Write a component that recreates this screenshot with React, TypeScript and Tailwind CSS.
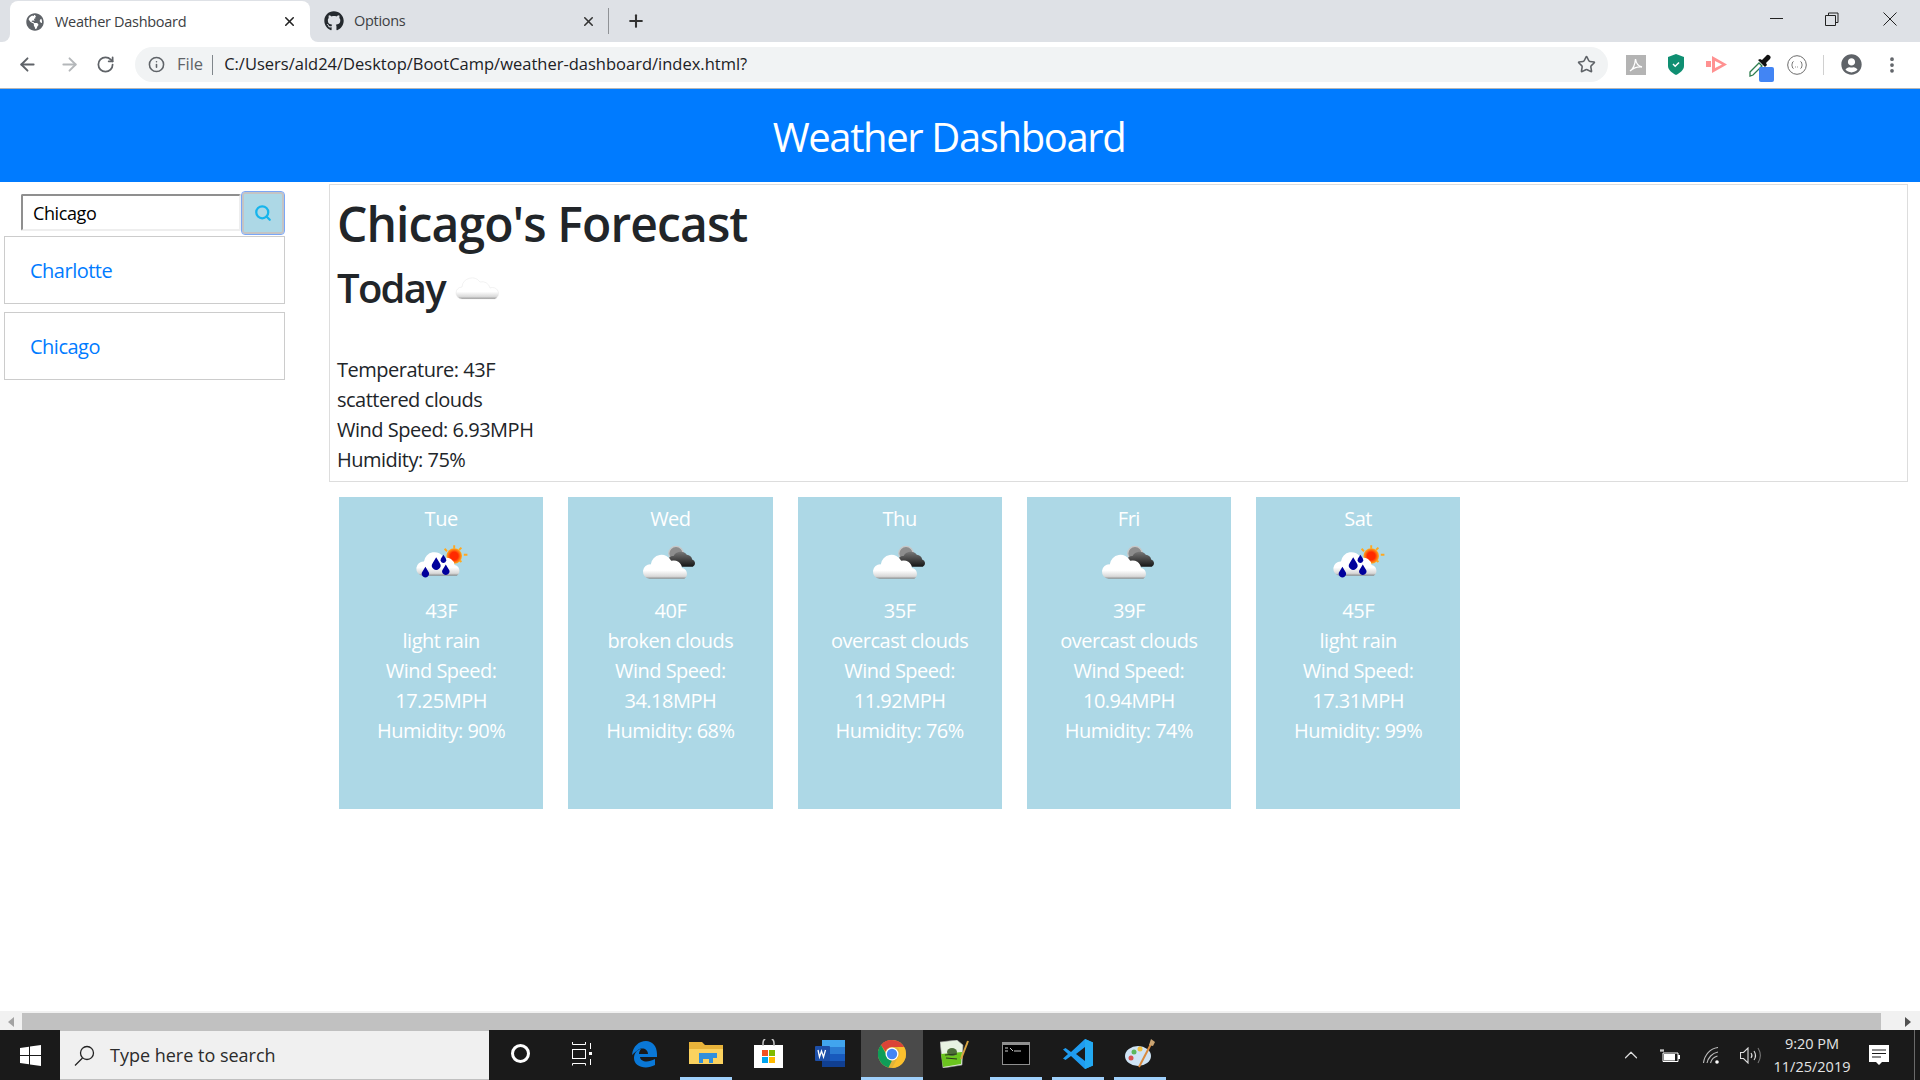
import React from 'react';
import { ArrowLeft, ArrowRight, RotateCw, Info, Star, X, Plus, Search, MoreVertical, ChevronUp } from 'lucide-react';
import { FaGithub, FaGlobeAmericas, FaUserCircle } from 'react-icons/fa';

type IconKind = 'rain' | 'broken' | 'overcast';

interface Day {
  name: string;
  icon: IconKind;
  temp: string;
  desc: string;
  wind: string;
  humidity: string;
}

const days: Day[] = [
  { name: 'Tue', icon: 'rain', temp: '43F', desc: 'light rain', wind: '17.25MPH', humidity: '90%' },
  { name: 'Wed', icon: 'broken', temp: '40F', desc: 'broken clouds', wind: '34.18MPH', humidity: '68%' },
  { name: 'Thu', icon: 'overcast', temp: '35F', desc: 'overcast clouds', wind: '11.92MPH', humidity: '76%' },
  { name: 'Fri', icon: 'overcast', temp: '39F', desc: 'overcast clouds', wind: '10.94MPH', humidity: '74%' },
  { name: 'Sat', icon: 'rain', temp: '45F', desc: 'light rain', wind: '17.31MPH', humidity: '99%' },
];

const cloudPath = 'M8 30a6 6 0 0 1 1-12 9 9 0 0 1 17-3 7 7 0 0 1 9 6 5 5 0 0 1 2 9z';

const WeatherIcon: React.FC<{ kind: IconKind | 'today'; id: string; size: number }> = ({ kind, id, size }) => (
  <svg width={size} height={size} viewBox="0 0 50 50">
    <defs>
      <linearGradient id={`${id}-w`} x1="0" y1="0" x2="0" y2="1">
        <stop offset="0.65" stopColor="#ffffff" />
        <stop offset="0.9" stopColor="#d8d8d8" />
        <stop offset="1" stopColor="#8a8a8a" />
      </linearGradient>
      <linearGradient id={`${id}-d`} x1="0" y1="0" x2="0" y2="1">
        <stop offset="0" stopColor="#777777" />
        <stop offset="1" stopColor="#151515" />
      </linearGradient>
      <radialGradient id={`${id}-s`}>
        <stop offset="0.5" stopColor="#ff2a00" />
        <stop offset="1" stopColor="#ffb020" />
      </radialGradient>
    </defs>
    {kind === 'rain' && (
      <>
        <g stroke="#ffa820" strokeWidth="1.6">
          <path d="M36 6v3M44 14h3M42 8l-2 2M42 20l-2-2M28 9l2 2" />
        </g>
        <circle cx="36" cy="15" r="6.5" fill={`url(#${id}-s)`} />
        <g transform="translate(2 2) scale(0.98)">
          <path d={cloudPath} fill={`url(#${id}-w)`} />
        </g>
        <g fill="#00009c">
          <path d="M21 16l3 5a3.6 3.6 0 1 1-6 0z" />
          <path d="M27 14l2 3a2.4 2.4 0 1 1-4 0z" />
          <path d="M12 24l2.4 4a3 3 0 1 1-4.8 0z" />
          <path d="M29 22l2.4 4a3 3 0 1 1-4.8 0z" />
        </g>
      </>
    )}
    {(kind === 'broken' || kind === 'overcast') && (
      <>
        <circle cx="30" cy="13" r="6" fill="#8d8d8d" stroke="#c8c8c8" />
        <path d="M27 24a4.5 4.5 0 0 1 1-9 6.5 6.5 0 0 1 11-1 5 5 0 0 1 4.5 4 3.2 3.2 0 0 1 .5 6z" fill={`url(#${id}-d)`} />
        <g transform="translate(0 4)">
          <path d={cloudPath} fill={`url(#${id}-w)`} />
        </g>
      </>
    )}
    {kind === 'today' && (
      <g transform="translate(0 2)">
        <path d="M8 34a6 6 0 0 1 0-12 10 10 0 0 1 18-5 8 8 0 0 1 10 6 5.5 5.5 0 0 1 5 11z" fill={`url(#${id}-w)`} stroke="#e4e4e4" strokeWidth="0.5" />
      </g>
    )}
  </svg>
);

const ForecastCard: React.FC<{ day: Day }> = ({ day }) => (
  <div className="flex h-[312px] w-[204.25px] flex-col items-center bg-[#add8e6] pt-[7px] text-center text-[20px] leading-[30px] tracking-[-0.5px] text-white">
    <div>{day.name}</div>
    <div className="mt-[4px] flex h-[58px] items-start justify-center">
      <WeatherIcon kind={day.icon} id={`icon-${day.name}`} size={60} />
    </div>
    <div>{day.temp}</div>
    <div>{day.desc}</div>
    <div>Wind Speed:</div>
    <div>{day.wind}</div>
    <div>Humidity: {day.humidity}</div>
  </div>
);

const Flare: React.FC<{ side: 'left' | 'right' }> = ({ side }) => (
  <div className="h-2 w-2 self-end bg-white">
    <div className={side === 'left' ? 'h-full rounded-br-lg bg-[#dee1e6]' : 'h-full rounded-bl-lg bg-[#dee1e6]'} />
  </div>
);

const TabBar = () => (
  <div className="flex h-[42px] items-stretch bg-[#dee1e6] pl-[2px] pr-[23px] text-[#3c4043]">
    <Flare side="left" />
    <div className="mt-[1px] flex w-[300px] items-center rounded-t-lg bg-white pl-[16px] pr-[13px] text-[14.5px] tracking-[-0.3px]">
      <FaGlobeAmericas className="h-[18px] w-[18px] text-[#5f6368]" />
      <span className="ml-[11px] flex-1">Weather Dashboard</span>
      <X className="h-[15px] w-[15px] text-[#222]" strokeWidth={2.5} />
    </div>
    <Flare side="right" />
    <div className="flex w-[283px] items-center pl-[6px] pr-[5px] text-[14.5px] tracking-[-0.3px]">
      <FaGithub className="h-[20px] w-[20px] text-[#24292e]" />
      <span className="ml-[10px] flex-1">Options</span>
      <X className="h-[15px] w-[15px] text-[#333]" strokeWidth={2.5} />
    </div>
    <div className="my-[8px] ml-[7px] w-px bg-[#8f9296]" />
    <div className="ml-[17px] flex items-center">
      <Plus className="h-[20px] w-[20px] text-[#333]" strokeWidth={2.5} />
    </div>
    <div className="flex-1" />
    <div className="flex items-start pt-[18px]">
      <div className="h-px w-[13px] bg-[#222]" />
    </div>
    <div className="ml-[42px] flex items-start pt-[12px]">
      <svg width="14" height="14" viewBox="0 0 14 14" fill="none" stroke="#222">
        <path d="M3.5 3V1h9.5v9.500h-2M.5 3.500h10v10H.500z" />
      </svg>
    </div>
    <div className="ml-[44px] flex items-start pt-[12px]">
      <svg width="14" height="14" viewBox="0 0 14 14" fill="none" stroke="#222">
        <path d="M.5.500l13 13M13.500.500l-13 13" />
      </svg>
    </div>
  </div>
);

const ToolbarIcon: React.FC<{ width: number; children: React.ReactNode }> = ({ width, children }) => (
  <div className="flex items-center justify-center" style={{ width }}>
    {children}
  </div>
);

const Toolbar = () => (
  <div className="flex h-[47px] items-center border-b border-[#b5b5b5] bg-white pb-[1px]">
    <ToolbarIcon width={55}>
      <ArrowLeft className="h-[21px] w-[21px] text-[#5f6368]" strokeWidth={2.2} />
    </ToolbarIcon>
    <ToolbarIcon width={28}>
      <ArrowRight className="h-[21px] w-[21px] text-[#b4b7ba]" strokeWidth={2.2} />
    </ToolbarIcon>
    <ToolbarIcon width={45}>
      <RotateCw className="h-[19px] w-[19px] text-[#5f6368]" strokeWidth={2.2} />
    </ToolbarIcon>
    <div className="ml-[7px] flex h-[35px] w-[1473px] items-center rounded-full bg-[#f1f3f4] pl-[13px] pr-[12px] text-[16.500px]">
      <Info className="h-[17px] w-[17px] text-[#5f6368]" strokeWidth={2.2} />
      <span className="ml-[12px] text-[#5f6368]">File</span>
      <div className="ml-[9px] h-[20px] w-px bg-[#80868b]" />
      <span className="ml-[11px] flex-1 text-[#202124]">C:/Users/ald24/Desktop/BootCamp/weather-dashboard/index.html?</span>
      <Star className="h-[19px] w-[19px] text-[#5f6368]" strokeWidth={2} />
    </div>
    <div className="ml-[8px] flex items-center">
      <ToolbarIcon width={40}>
        <svg width="20" height="20" viewBox="0 0 20 20">
          <rect width="20" height="20" fill="#b4b4b4" />
          <path d="M4 16c3-2 5-6 5.500-12 .5 4 2 7 6.500 8-4-.5-8 .5-12 4z" fill="none" stroke="#fff" strokeWidth="1.3" />
        </svg>
      </ToolbarIcon>
      <ToolbarIcon width={40}>
        <svg width="16" height="21" viewBox="0 0 16 21">
          <path d="M8 0l8 3v9c0 4-4 7-8 9-4-2-8-5-8-9V3z" fill="#0f8f72" />
          <path d="M5 10l2.200 2.200L11 8.500" fill="none" stroke="#fff" strokeWidth="1.500" />
        </svg>
      </ToolbarIcon>
      <ToolbarIcon width={40}>
        <svg width="21" height="17" viewBox="0 0 21 17">
          <path d="M0 5h5v6H0zM6 0l15 8.500L6 17zM9 5v7l7-3.500z" fill="#ff9191" fillRule="evenodd" />
        </svg>
      </ToolbarIcon>
      <ToolbarIcon width={42}>
        <div className="ml-[10px] mt-[7px] flex">
          <svg width="26" height="28" viewBox="0 0 26 28">
            <path d="M1 18L10 9l3 3-9 9-3 1z" fill="#fff" stroke="#2e7d4f" strokeWidth="1.300" />
            <path d="M9 6l7 7 2-2-1-2 4-4a2 2 0 0 0-4-3l-4 4-2-1z" fill="#111" />
            <rect x="10" y="13" width="15" height="15" rx="2" fill="#4285f4" />
          </svg>
        </div>
      </ToolbarIcon>
      <ToolbarIcon width={37}>
        <svg width="20" height="20" viewBox="0 0 20 20" fill="none">
          <circle cx="10" cy="10" r="9.300" stroke="#6b6b6b" strokeWidth="1" />
          <path d="M6.500 6.500c-1.500 0-1 3.500-2 3.500 1 0 .5 3.500 2 3.500M13.500 6.500c1.500 0 1 3.500 2 3.500-1 0-.5 3.500-2 3.500" stroke="#6b6b6b" />
          <path d="M8 12h4" stroke="#999" strokeDasharray="1 1" />
        </svg>
      </ToolbarIcon>
      <div className="ml-[8px] h-[20px] w-px bg-[#d0d0d0]" />
      <ToolbarIcon width={55}>
        <FaUserCircle className="h-[21px] w-[21px] text-[#5f6368]" />
      </ToolbarIcon>
      <ToolbarIcon width={25}>
        <MoreVertical className="h-[20px] w-[20px] text-[#5f6368]" strokeWidth={2.5} />
      </ToolbarIcon>
    </div>
  </div>
);

const Sidebar = () => (
  <div className="w-[329px] shrink-0">
    <div className="mt-[9px] flex h-[43px] items-center pl-[21px]">
      <input
        readOnly
        value="Chicago"
        className="h-[37px] w-[220px] rounded-[2px] border-2 border-b-[#eeeeee] border-l-[#8f8f8f] border-r-[#eeeeee] border-t-[#8f8f8f] bg-white pl-[10px] text-[18px] tracking-[-0.4px] text-black outline-none"
      />
      <button className="ml-[1px] flex h-[42px] w-[42px] items-center justify-center rounded-[3px] border-2 border-[#c4c4c4] bg-[#add8e6] outline outline-1 outline-[#7aa7f7]">
        <Search className="h-[18px] w-[18px] text-[#17b5ec]" strokeWidth={3} />
      </button>
    </div>
    <div className="ml-[4px] mt-[2px] flex w-[281px] flex-col gap-[8px] text-[20px] tracking-[-0.5px] text-[#007bff]">
      <div className="flex h-[68px] items-center border border-[#cccccc] pl-[25px] pt-[2px]">Charlotte</div>
      <div className="flex h-[68px] items-center border border-[#cccccc] pl-[25px] pt-[2px]">Chicago</div>
    </div>
  </div>
);

const Forecast = () => (
  <div className="min-w-0 flex-1 pr-[12px]">
    <div className="mt-[2px] h-[298px] border border-[#dddddd] pl-[7px] text-[#212529]">
      <h1 className="mt-[10px] text-[48px] font-semibold leading-[57px] tracking-[-0.9px]">Chicago's Forecast</h1>
      <h2 className="mt-[12px] flex h-[48px] items-center text-[40px] font-semibold leading-[48px] tracking-[-1.7px] text-[#212529]">
        Today
        <span className="ml-[9px] flex items-center">
          <WeatherIcon kind="today" id="icon-today" size={50} />
        </span>
      </h2>
      <div className="mt-[43px] text-[20px] leading-[30px] tracking-[-0.5px]">
        <div>Temperature: 43F</div>
        <div>scattered clouds</div>
        <div>Wind Speed: 6.93MPH</div>
        <div>Humidity: 75%</div>
      </div>
    </div>
    <div className="ml-[10px] mt-[15px] flex gap-[25px]">
      {days.map((day) => (
        <ForecastCard key={day.name} day={day} />
      ))}
    </div>
  </div>
);

const Scrollbar = () => (
  <div className="flex h-[19px] items-stretch bg-[#f1f1f1] pt-[2px]">
    <div className="flex w-[22px] items-center justify-center">
      <div className="h-0 w-0 border-y-[5px] border-r-[6px] border-y-transparent border-r-[#a3a3a3]" />
    </div>
    <div className="flex-1 bg-[#c1c1c1]" />
    <div className="flex w-[39px] items-center justify-center pl-[14px]">
      <div className="h-0 w-0 border-y-[5px] border-l-[6px] border-y-transparent border-l-[#505050]" />
    </div>
  </div>
);

const TaskCell: React.FC<{ active?: boolean; running?: boolean; children: React.ReactNode }> = ({ active, running, children }) => (
  <div className={active ? 'flex h-full w-[62px] flex-col bg-[#4a4a4a]' : 'flex h-full w-[62px] flex-col'}>
    <div className="flex flex-1 items-center justify-center">{children}</div>
    <div className={active ? 'h-[3px] bg-[#9fd0fb]' : running ? 'mx-[5px] h-[3px] bg-[#9fd0fb]' : 'h-[3px]'} />
  </div>
);

const Taskbar = () => (
  <div className="flex h-[50px] items-center bg-[#1a1a1a] text-white">
    <div className="flex h-full w-[60px] items-center justify-center">
      <svg width="21" height="21" viewBox="0 0 21 21" fill="#fff">
        <path d="M0 3l9-1.300V10H0zM10 1.500L21 0v10H10zM0 11h9v8.300L0 18zM10 11h11v10l-11-1.500z" />
      </svg>
    </div>
    <div className="flex h-full w-[429px] items-center border-t border-b border-[#c0c0c0] bg-[#f0f0f0] pl-[14px] text-[18px] text-[#2b2b2b]">
      <svg width="21" height="21" viewBox="0 0 21 21" fill="none" stroke="#222" strokeWidth="1.300">
        <circle cx="13" cy="8" r="6.500" />
        <path d="M8.500 13L1 20.500" />
      </svg>
      <span className="ml-[15px]">Type here to search</span>
    </div>
    <TaskCell>
      <div className="h-[19px] w-[19px] rounded-full border-[3px] border-white" />
    </TaskCell>
    <TaskCell>
      <svg width="20" height="24" viewBox="0 0 20 24" fill="none" stroke="#fff">
        <path d="M.5 2.500h13M.5 21.500h13M.5 21.500v2M13.500 21.500v2M13.500 0v2.500M.5 0v2.500" />
        <rect x=".5" y="7.500" width="13" height="9" />
        <path d="M18.500 1v6M18.500 17v6" />
        <rect x="17" y="10" width="3" height="3" fill="#fff" stroke="none" />
      </svg>
    </TaskCell>
    <TaskCell>
      <svg width="26" height="28" viewBox="0 0 26 28">
        <path d="M1 15C2 6 8 1 15 1c6 0 11 5 11 13v3H9c.5 5 8 6 15 2v6c-9 5-21 2-21-7 0-2 .5-4 2-6 1-1 3-3 5-3-1 1-2 3-2 5h9c0-5-6-7-10-4-3 2-5 4-7 6z" fill="#0a78d7" />
      </svg>
    </TaskCell>
    <TaskCell running>
      <svg width="34" height="27" viewBox="0 0 34 27">
        <path d="M0 2h13l3 3h18v19H0z" fill="#e8b33a" />
        <path d="M0 9h34v15H0z" fill="#fbd25f" />
        <path d="M10 13h18v5h-4v5h-4v-4h-6v4h-4z" fill="#2f8fdc" />
      </svg>
    </TaskCell>
    <TaskCell>
      <svg width="29" height="29" viewBox="0 0 29 29">
        <path d="M0 6h29v23H0z" fill="#fff" />
        <path d="M9 7V4a5.500 5.500 0 0 1 11 0v3" fill="none" stroke="#c8c8c8" strokeWidth="1.500" />
        <path d="M8 11h6v6H8z" fill="#f25022" />
        <path d="M15 11h6v6h-6z" fill="#7fba00" />
        <path d="M8 18h6v6H8z" fill="#00a4ef" />
        <path d="M15 18h6v6h-6z" fill="#ffb900" />
      </svg>
    </TaskCell>
    <TaskCell>
      <svg width="30" height="27" viewBox="0 0 30 27">
        <path d="M7 0h23v7H7z" fill="#41a5ee" />
        <path d="M7 7h23v7H7z" fill="#2b7cd3" />
        <path d="M7 14h23v7H7z" fill="#185abd" />
        <path d="M7 21h23v6H7z" fill="#103f91" />
        <rect x="0" y="6" width="15" height="15" rx="1" fill="#1d4fa8" />
        <path d="M3 10l1.500 7 2-6 2 6 2-7" fill="none" stroke="#fff" strokeWidth="1.300" />
      </svg>
    </TaskCell>
    <TaskCell active>
      <svg width="28" height="28" viewBox="0 0 28 28">
        <circle cx="14" cy="14" r="14" fill="#e2b33a" />
        <path d="M14 0a14 14 0 0 1 12.100 7H14a7 7 0 0 0-6.500 4.500L3 5a14 14 0 0 1 11-5z" fill="#db4437" />
        <path d="M3 5l6 10.500a6 6 0 0 0 5 5L10.500 27.500A14 14 0 0 1 3 5z" fill="#0f9d58" />
        <path d="M26.100 7A14 14 0 0 1 14 28l6-10.500A7 7 0 0 0 19 7z" fill="#fbc02d" />
        <circle cx="14" cy="14" r="6.500" fill="#fff" />
        <circle cx="14" cy="14" r="5.200" fill="#4285f4" />
      </svg>
    </TaskCell>
    <TaskCell>
      <svg width="29" height="28" viewBox="0 0 29 28">
        <path d="M0 2l17-2 6 5-1 20-19 3z" fill="#e8f2e2" stroke="#9a9a9a" strokeWidth="0.600" />
        <path d="M1 14l21-2-1 12-18 3z" fill="#6bc41f" />
        <ellipse cx="12" cy="12" rx="5" ry="4" fill="#4e6e3a" />
        <path d="M5 15l12-1M6 18l11 1" stroke="#2a3a1c" strokeWidth="1.200" />
        <path d="M21 19L28 1" stroke="#d9a441" strokeWidth="2" />
      </svg>
    </TaskCell>
    <TaskCell running>
      <svg width="28" height="23" viewBox="0 0 28 23">
        <rect width="28" height="23" fill="#8f8f8f" />
        <rect x="1" y="3" width="26" height="19" fill="#000" />
        <path d="M3 6h3M3 9h3M8 6l3 3M12 9h7" stroke="#ccc" strokeWidth="1" />
      </svg>
    </TaskCell>
    <TaskCell running>
      <svg width="30" height="30" viewBox="0 0 30 30">
        <path d="M22 0l8 3.500v23L22 30 8 17l-5.500 4L0 19.500 5 15 0 10.500 2.500 9l5.500 4z" fill="#1f9cf0" />
        <path d="M22 8L13 15l9 7z" fill="#1a1a1a" />
        <path d="M22 0l8 3.500v23L22 30z" fill="#23a9f2" />
      </svg>
    </TaskCell>
    <TaskCell running>
      <svg width="30" height="29" viewBox="0 0 30 29">
        <ellipse cx="13" cy="17" rx="13" ry="10" fill="#cfe4f5" />
        <circle cx="6" cy="19" r="2.500" fill="#d9534f" />
        <circle cx="9" cy="13" r="2.500" fill="#5cb85c" />
        <circle cx="15" cy="10" r="2.500" fill="#f0c040" />
        <path d="M14 28L26 5" stroke="#d98a3d" strokeWidth="2" />
        <path d="M24 6l2-6 4 3-2 4z" fill="#caa472" />
      </svg>
    </TaskCell>
    <div className="flex-1" />
    <div className="flex h-full items-center">
      <ChevronUp className="h-[22px] w-[22px] text-[#dddddd]" strokeWidth={1.300} />
      <div className="ml-[17px] flex w-[21px] items-center justify-center">
        <svg width="20" height="13" viewBox="0 0 20 13" fill="none" stroke="#fff">
          <path d="M3 4v8.500h15V4H3z" />
          <rect x="4" y="5" width="11" height="6.500" fill="#fff" stroke="none" />
          <rect x="18" y="6" width="2" height="4" fill="#fff" stroke="none" />
          <path d="M1 0v2M3 0v2M0 2h4" />
        </svg>
      </div>
      <div className="ml-[23px]">
        <svg width="17" height="17" viewBox="0 0 17 17" fill="none" stroke="#bdbdbd" strokeWidth="1.100">
          <path d="M.5 16C1.500 8 7 1.500 15 .5M4 16c1-5 5-10 11-11M7.500 16c.8-3 3-6 7-7" />
          <circle cx="14" cy="15" r="1.800" fill="#fff" stroke="none" />
        </svg>
      </div>
      <div className="ml-[20px]">
        <svg width="21" height="17" viewBox="0 0 21 17" fill="none" stroke="#dddddd" strokeWidth="1.100">
          <path d="M.5 5.500h3L8 1v15l-4.500-4.500h-3z" />
          <path d="M11 6a4 4 0 0 1 0 5" />
          <path d="M14 4a8 8 0 0 1 0 9" />
          <path d="M18 1a14 14 0 0 1 0 15" stroke="#777" />
        </svg>
      </div>
    </div>
    <div className="ml-[8px] flex w-[86px] flex-col items-center text-[14.500px] leading-[23px] text-[#e4e4e4]">
      <span>9:20 PM</span>
      <span>11/25/2019</span>
    </div>
    <div className="ml-[14px] flex w-[20px] items-center justify-center">
      <svg width="20" height="20" viewBox="0 0 20 20">
        <path d="M0 0h20v17h-7l-3 3-3-3H0z" fill="#fff" />
        <path d="M3 5h14M3 8.500h14M3 12h9" stroke="#1a1a1a" strokeWidth="1.100" />
      </svg>
    </div>
    <div className="ml-[25px] h-full w-px bg-[#6a6a6a]" />
    <div className="w-[5px]" />
  </div>
);

export default function App() {
  return (
    <div className="flex h-screen w-full flex-col overflow-hidden bg-white font-['Open_Sans',sans-serif]">
      <TabBar />
      <Toolbar />
      <div className="flex h-[93px] shrink-0 items-center justify-center bg-[#007bff] pr-[22px] pt-[2px] text-[40px] tracking-[-1.37px] text-white">
        Weather Dashboard
      </div>
      <div className="flex min-h-0 flex-1">
        <Sidebar />
        <Forecast />
      </div>
      <Scrollbar />
      <Taskbar />
    </div>
  );
}
